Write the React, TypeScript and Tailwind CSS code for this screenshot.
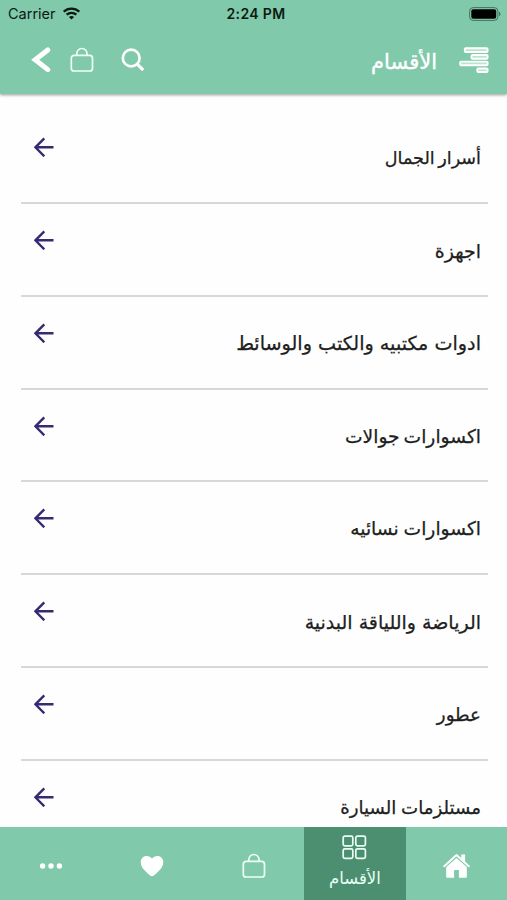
import type { ReactNode } from 'react'

const GREEN_BAR = 'bg-[#80c9ab]'

const categories = [
  { name: 'أسرار الجمال', text: 'text-[17.6px] [word-spacing:-2px]' },
  { name: 'اجهزة', text: 'text-[19px]' },
  { name: 'ادوات مكتبيه والكتب والوسائط', text: 'text-[19.2px]' },
  { name: 'اكسوارات جوالات', text: 'text-[18.7px] [word-spacing:-2px]' },
  { name: 'اكسوارات نسائيه', text: 'text-[18.7px] [word-spacing:-1px]' },
  { name: 'الرياضة واللياقة البدنية', text: 'text-[19px]' },
  { name: 'عطور', text: 'text-[18.3px]' },
  { name: 'مستلزمات السيارة', text: 'text-[18.2px] [word-spacing:-1px]' },
]

function WifiIcon() {
  return (
    <svg width="17" height="13" viewBox="0 0 17 13" fill="none" stroke="#0c1a14" strokeWidth="2.3">
      <path d="M.8 4.7C5 .6 12 .6 16.2 4.7" />
      <path d="M3.6 7.7c2.8-2.5 7-2.5 9.8 0" />
      <path d="M8.5 12.6 5.9 10c1.5-1.3 3.7-1.3 5.2 0z" fill="#0c1a14" stroke="none" />
    </svg>
  )
}

function BatteryIcon() {
  return (
    <svg width="32" height="14" viewBox="0 0 32 14">
      <rect x="0.6" y="0.6" width="28.3" height="12.8" rx="3.6" fill="none" stroke="#47705f" strokeWidth="1" />
      <rect x="2.3" y="2.3" width="24.9" height="9.4" rx="2" fill="#000" />
      <path d="M30 4.8c1.9.7 1.9 3.7 0 4.4z" fill="#47705f" />
    </svg>
  )
}

function BagIcon() {
  return (
    <svg width="24" height="26" viewBox="0 0 24 26" fill="none" stroke="#effff7" strokeWidth="1.7">
      <rect x="1.3" y="8.4" width="21.2" height="15.6" rx="2.8" />
      <path d="M6.8 8.4V6.6a5.1 5.1 0 0 1 10.2 0v1.8" />
    </svg>
  )
}

function BackIcon() {
  return (
    <svg width="20" height="26" viewBox="0 0 20 26" fill="none" stroke="#fff" strokeWidth="5">
      <path d="M16.8 3 4.2 12.8l12.6 9.8" strokeLinecap="round" strokeLinejoin="miter" />
    </svg>
  )
}

function SearchIcon() {
  return (
    <svg width="24" height="24" viewBox="0 0 24 24" fill="none" stroke="#fff">
      <circle cx="10.2" cy="10" r="8.4" strokeWidth="2.6" />
      <path d="m16.2 16.2 6 5.9" strokeWidth="3.2" />
    </svg>
  )
}

function MenuIcon() {
  return (
    <svg width="30" height="27" viewBox="0 0 30 27" fill="#b9e6d2" stroke="#fff" strokeWidth="1.9">
      <rect x="5.8" y="1.3" width="22.8" height="3.7" rx="1" />
      <rect x="12.5" y="8" width="16.1" height="3.7" rx="1" />
      <rect x="1.2" y="14.6" width="27.4" height="3.7" rx="1" />
      <rect x="18.3" y="21.5" width="10.3" height="3.5" rx="1" />
    </svg>
  )
}

function ArrowIcon() {
  return (
    <svg width="20" height="20" viewBox="0 0 20 20" fill="none" stroke="#352b70" strokeWidth="2.4">
      <path d="M19.5 10.3H2M10.3 1.3l-8.9 9 8.9 9" />
    </svg>
  )
}

function DotsIcon() {
  return (
    <svg width="24" height="8" viewBox="0 0 24 8" fill="#fff">
      <circle cx="3.6" cy="4" r="2.7" />
      <circle cx="12" cy="4" r="2.7" />
      <circle cx="20.4" cy="4" r="2.7" />
    </svg>
  )
}

function HeartIcon() {
  return (
    <svg width="24" height="22" viewBox="0 0 24 22" fill="#fff">
      <path d="M12 21.3c-1 0-2.1-.9-5.3-3.8C3.2 14.4.7 11.2.7 7.3.7 3.6 3.3 1 6.5 1c2.3 0 4.3 1 5.5 2.7C13.2 2 15.2 1 17.5 1c3.2 0 5.8 2.6 5.8 6.3 0 3.9-2.5 7.1-6 10.2-3.2 2.9-4.3 3.8-5.3 3.8z" />
    </svg>
  )
}

function GridIcon() {
  return (
    <svg width="25" height="25" viewBox="0 0 25 25" fill="none" stroke="#e9fff5" strokeWidth="1.7">
      <rect x="1.2" y="1.2" width="9.6" height="9.6" rx="1.6" />
      <rect x="13.8" y="1.2" width="9.6" height="9.6" rx="1.6" />
      <rect x="1.2" y="13.8" width="9.6" height="9.6" rx="1.6" />
      <rect x="13.8" y="13.8" width="9.6" height="9.6" rx="1.6" />
    </svg>
  )
}

function HomeIcon() {
  return (
    <svg width="27" height="26" viewBox="0 0 27 26" fill="#fff">
      <path d="M13.5 4.9 3.2 14.1v9.7c0 .6.4 1 1 1h6.900v-7.900h4.800v7.900h6.900c.6 0 1-.4 1-1v-9.700z" />
      <path d="M1.2 13.2 13.5 2l12.300 11.200" fill="none" stroke="#fff" strokeWidth="1.9" strokeLinecap="round" strokeLinejoin="round" />
      <path d="M18.2 1.5h3.900v7.400l-3.900-3.500z" />
    </svg>
  )
}

function ArabicText({ children, className }: { children: string; className: string }) {
  return (
    <span dir="rtl" className={`block whitespace-nowrap font-['DejaVu_Sans',sans-serif] ${className}`}>
      {children}
    </span>
  )
}

function CategoryRow({ name, text }: { name: string; text: string }) {
  return (
    <li className="flex h-[92.85px] shrink-0 items-start justify-between border-b-2 border-[#d8d8d8] pl-[13px] pr-[7px]">
      <div className="pt-[26px]"><ArrowIcon /></div>
      <ArabicText className={`pt-[32px] leading-[30px] text-[#202020] [-webkit-text-stroke:0.25px_#202020] ${text}`}>{name}</ArabicText>
    </li>
  )
}

function Tab({ children, active }: { children: ReactNode; active?: boolean }) {
  return (
    <button className={`flex flex-1 flex-col items-center ${active ? 'bg-[#4b8f70] pt-[8px]' : 'justify-center pt-[5px]'}`}>
      {children}
    </button>
  )
}

export default function App() {
  return (
    <div className="flex h-[900px] w-[507px] flex-col overflow-hidden bg-[#fefefe] font-['Inter',sans-serif]">
      <header className={`z-10 h-[94px] shrink-0 shadow-[0_1px_3px_rgba(0,0,0,0.4)] ${GREEN_BAR}`}>
        {/* Status bar */}
        <div className="grid h-[27px] grid-cols-3 items-center pl-[8px] pr-[6px] text-[#0c1a14]">
          <div className="flex items-center gap-[7px] text-[14.5px]">
            <span>Carrier</span>
            <WifiIcon />
          </div>
          <span className="pl-[3px] text-center text-[14px] font-semibold tracking-[0.35px]">2:24 PM</span>
          <div className="flex justify-end"><BatteryIcon /></div>
        </div>

        {/* Title bar */}
        <div className="flex h-[66px] items-center justify-between pl-[31px] pr-[18px]">
          <div className="flex items-center">
            <BackIcon />
            <div className="ml-[19px]"><BagIcon /></div>
            <div className="ml-[27px]"><SearchIcon /></div>
          </div>
          <div className="flex items-center gap-[22px]">
            <ArabicText className="pt-[4px] text-[21px] leading-[30px] text-white [-webkit-text-stroke:0.4px_#fff]">الأقسام</ArabicText>
            <MenuIcon />
          </div>
        </div>
      </header>

      <ul className="flex min-h-0 flex-1 flex-col overflow-hidden pl-[21px] pr-[19px] pt-[17px]">
        {categories.map(c => <CategoryRow key={c.name} name={c.name} text={c.text} />)}
      </ul>

      <nav className={`flex h-[73px] shrink-0 ${GREEN_BAR}`}>
        <Tab><DotsIcon /></Tab>
        <Tab><HeartIcon /></Tab>
        <Tab><BagIcon /></Tab>
        <Tab active>
          <GridIcon />
          <ArabicText className="mt-[7px] text-[16.5px] leading-[24px] text-[#e9fff5]">الأقسام</ArabicText>
        </Tab>
        <Tab><HomeIcon /></Tab>
      </nav>
    </div>
  )
}
